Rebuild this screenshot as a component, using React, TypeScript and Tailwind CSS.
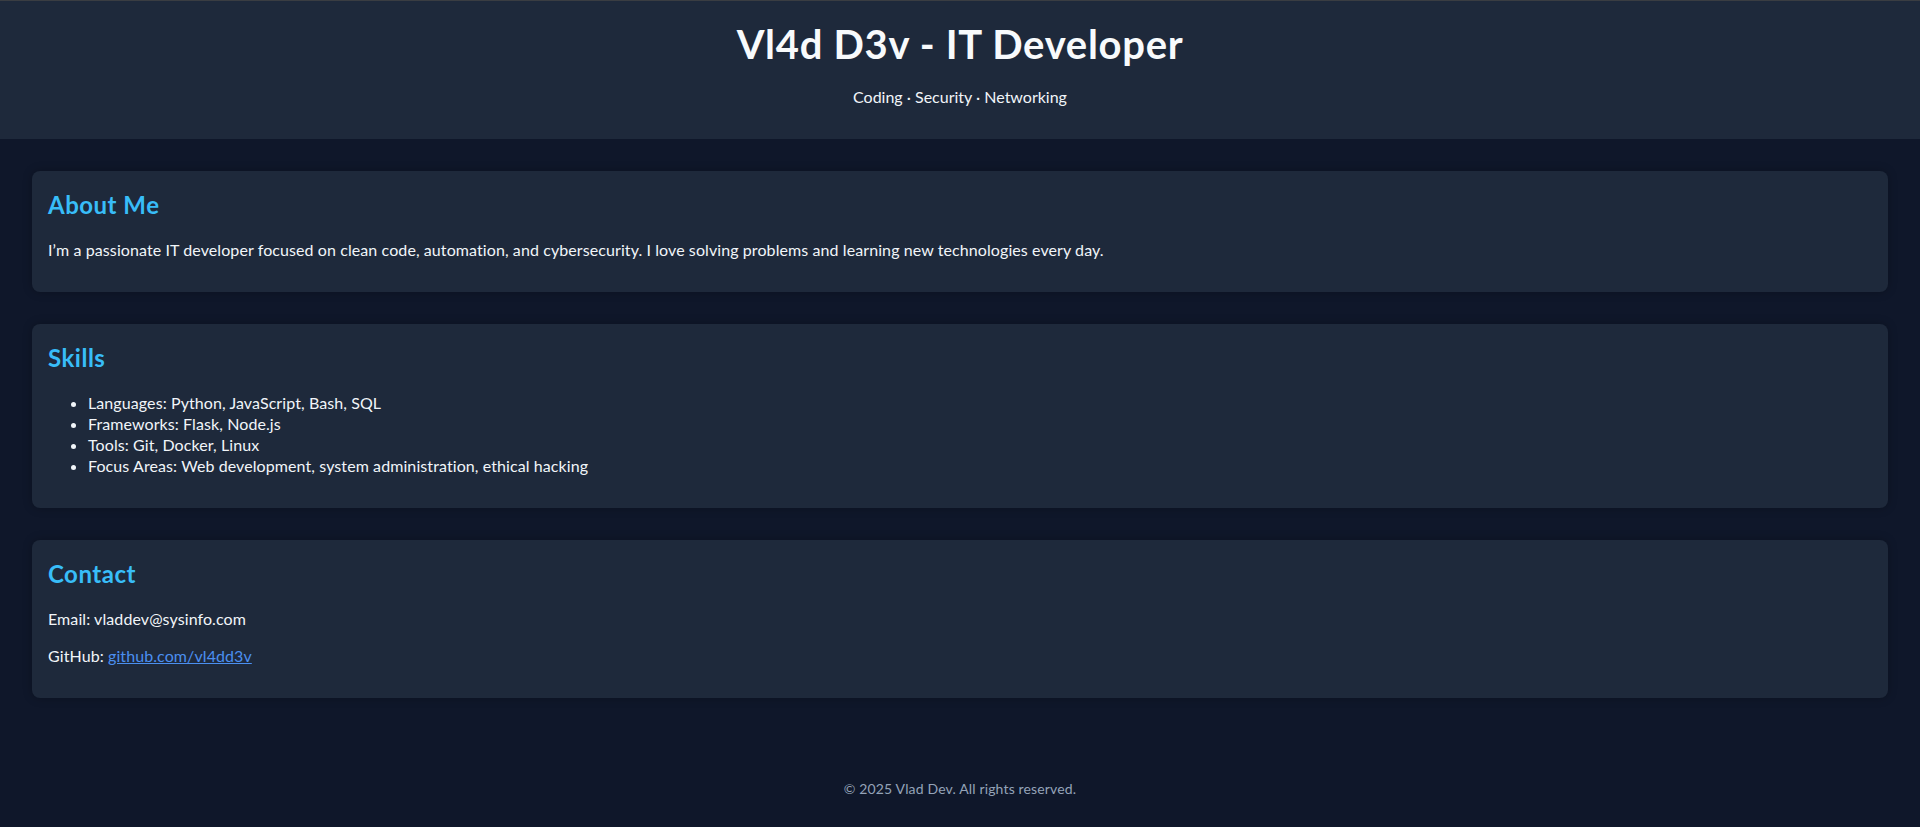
export default function App() {
  const card = 'rounded-lg bg-[#1e293b] p-4 shadow-[0_0_10px_rgba(0,0,0,0.25)]';
  const h2 = 'mb-[18px] pt-[2px] text-[24px] font-bold leading-[32px] tracking-[0.5px] text-[#38bdf8]';
  const txt = 'pt-[1px] text-[16px] leading-[20px] tracking-[0.09px]';
  return (
    <div
      className="min-h-screen bg-[#0f172a] text-[#f1f5f9]"
      style={{ fontFamily: 'Lato, "Noto Sans", sans-serif' }}
    >
      <header className="border-t border-[#3a3d42] bg-[#1e293b] px-4 pt-4 pb-4 text-center">
        <h1 className="m-0 pt-[2px] text-[40px] font-bold leading-[51px] tracking-[0.7px] text-[#f8fafc]">
          Vl4d D3v - IT Developer
        </h1>
        <p className="my-4 pt-[1px] text-[16px] leading-[20px]">Coding · Security · Networking</p>
      </header>

      <main className="flex flex-col gap-8 px-8 pt-8">
        <section className={card}>
          <h2 className={h2}>About Me</h2>
          <p className={`mb-4 ${txt}`}>
            I’m a passionate IT developer focused on clean code, automation, and cybersecurity. I love solving problems and learning new technologies every day.
          </p>
        </section>

        <section className={card}>
          <h2 className={h2}>Skills</h2>
          <ul className="mb-4 list-disc pl-10 text-[16px] leading-[21px] tracking-[0.09px]">
            <li>Languages: Python, JavaScript, Bash, SQL</li>
            <li>Frameworks: Flask, Node.js</li>
            <li>Tools: Git, Docker, Linux</li>
            <li>Focus Areas: Web development, system administration, ethical hacking</li>
          </ul>
        </section>

        <section className={card}>
          <h2 className={h2}>Contact</h2>
          <p className={`mb-4 ${txt}`}>Email: vladdev@sysinfo.com</p>
          <p className={`mb-4 ${txt}`}>
            GitHub:{' '}
            <a href="#" className="text-[#4b8ff0] underline">
              github.com/vl4dd3v
            </a>
          </p>
        </section>
      </main>

      <footer className="pt-[81px] pb-4 text-center text-[14px] leading-[19px] tracking-[0.15px] text-[#94a3b8]">
        © 2025 Vlad Dev. All rights reserved.
      </footer>
    </div>
  );
}
